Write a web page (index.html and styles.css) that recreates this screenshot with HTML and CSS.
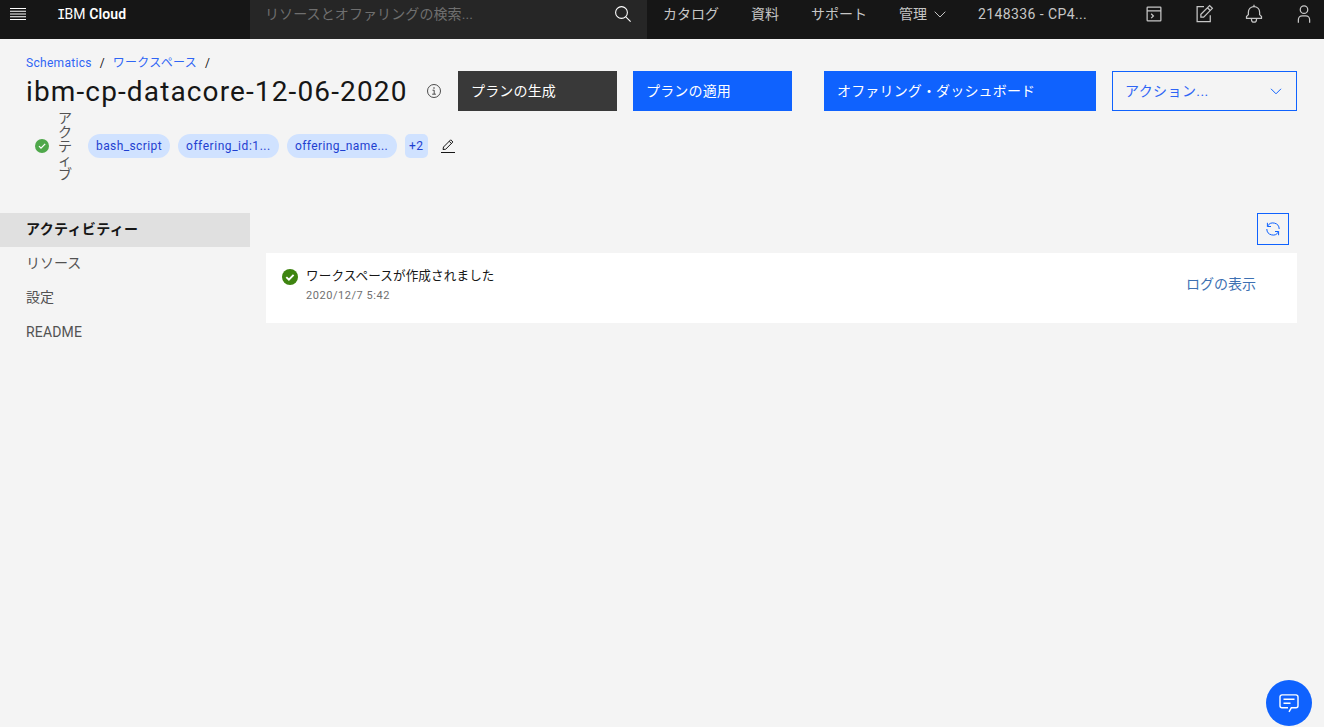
FILE: index.html
```
<!DOCTYPE html>
<html lang="ja">
<head>
    <meta charset="UTF-8">
    <meta name="viewport" content="width=device-width, initial-scale=1.0">
    <title>Schematics - IBM Cloud</title>
    <link rel="stylesheet" href="styles.css">
</head>
<body>
    <!-- Global header -->
    <header class="header">
        <div class="brand">
            <svg class="menu-icon" width="16" height="12" viewBox="0 0 16 12">
                <path d="M0 .5h16M0 3.250h16M0 6h16M0 8.750h16M0 11.500h16" stroke="#fff"/>
            </svg>
            <span class="brand-name"><span class="brand-i">I</span>BM <b>Cloud</b></span>
        </div>
        <div class="search">
            <span class="ja">リソースとオファリングの検索...</span>
            <svg width="16" height="16" viewBox="0 0 16 16" fill="none" stroke="#fff" stroke-width="1.1">
                <circle cx="6.5" cy="6.5" r="5.9"/>
                <path d="M10.8 10.8l4.8 4.8"/>
            </svg>
        </div>
        <nav class="nav">
            <a><span class="ja">カタログ</span></a>
            <a><span class="ja">資料</span></a>
            <a><span class="ja">サポート</span></a>
            <a><span class="ja">管理</span>
                <svg width="12" height="7" viewBox="0 0 12 7" fill="none" stroke="#c6c6c6"><path d="M.7.7L6 6 11.3.7"/></svg>
            </a>
            <a class="account">2148336 - CP4...</a>
        </nav>
        <div class="header-icons">
            <svg width="20" height="20" viewBox="0 0 32 32" fill="#c6c6c6">
                <path d="M26 4H6a2 2 0 0 0-2 2v20a2 2 0 0 0 2 2h20a2 2 0 0 0 2-2V6a2 2 0 0 0-2-2zm0 2v4H6V6zM6 26V12h20v14z"/>
                <path d="M10.8 16.2l1.4-1.4 4.2 4.2-4.2 4.2-1.4-1.4 2.8-2.8z"/>
            </svg>
            <svg width="20" height="20" viewBox="0 0 32 32" fill="none" stroke="#c6c6c6" stroke-width="2">
                <path d="M16 4H5v24h21V18"/>
                <path d="M11 21v-4.500L25 2.600l4.400 4.400L15.500 21zM21.500 6l4.500 4.500"/>
            </svg>
            <svg width="20" height="20" viewBox="0 0 32 32" fill="#c6c6c6">
                <path d="M28.700 19.300L26 16.600V13a10 10 0 0 0-9-9.950V1h-2v2.050A10 10 0 0 0 6 13v3.600l-2.700 2.700A1 1 0 0 0 3 20v3a1 1 0 0 0 1 1h7v1a5 5 0 0 0 10 0v-1h7a1 1 0 0 0 1-1v-3a1 1 0 0 0-.3-.7zM19 25a3 3 0 0 1-6 0v-1h6zm8-3H5v-1.600l2.700-2.700A1 1 0 0 0 8 17v-4a8 8 0 0 1 16 0v4a1 1 0 0 0 .3.700l2.700 2.700z"/>
            </svg>
            <svg width="20" height="20" viewBox="0 0 32 32" fill="none" stroke="#c6c6c6" stroke-width="2">
                <circle cx="16" cy="9" r="6"/>
                <path d="M7 30v-5a6 6 0 0 1 6-6h6a6 6 0 0 1 6 6v5"/>
            </svg>
        </div>
    </header>

    <!-- Workspace title, tags and actions -->
    <section class="page-header">
        <div class="title-area">
            <div class="breadcrumb">
                <a class="crumb">Schematics</a><span>/</span><a class="crumb-ja">ワークスペース</a><span>/</span>
            </div>
            <div class="title-row">
                <h1>ibm-cp-datacore-12-06-2020</h1>
                <svg width="14" height="14" viewBox="0 0 14 14" fill="none" stroke="#393939" stroke-width=".9">
                    <circle cx="7" cy="7" r="6.500"/>
                    <path d="M5.500 6.200H7.200V10M5.200 10.200h3.700"/>
                    <circle cx="7" cy="3.900" r=".75" fill="#393939" stroke="none"/>
                </svg>
            </div>
            <div class="status-row">
                <svg class="status-icon" width="14" height="14" viewBox="0 0 14 14">
                    <circle cx="7" cy="7" r="7" fill="#4fa84b"/>
                    <path d="M4 7.100l2 2 4.200-4.200" fill="none" stroke="#fff" stroke-width="1.300"/>
                </svg>
                <span class="status-text">アクティブ</span>
                <span class="tag tag-bash">bash_script</span>
                <span class="tag tag-id">offering_id:1...</span>
                <span class="tag tag-name">offering_name...</span>
                <span class="tag tag-more">+2</span>
                <svg class="edit-icon" width="14" height="14" viewBox="0 0 14 14" fill="none" stroke="#161616">
                    <path d="M0 13.500h14"/>
                    <path d="M2 10.500l.5-2.500L9.700.8 11.900 3 4.700 10.200zM8.200 2.300l2.200 2.200"/>
                </svg>
            </div>
        </div>
        <div class="actions">
            <button class="btn btn-dark">プランの生成</button>
            <button class="btn btn-primary">プランの適用</button>
            <button class="btn btn-primary btn-dashboard">オファリング・ダッシュボード</button>
            <button class="btn btn-outline"><span class="ja">アクション...</span>
                <svg width="12" height="7" viewBox="0 0 12 7" fill="none" stroke="#0f62fe"><path d="M1 .8l5 5 5-5"/></svg>
            </button>
        </div>
    </section>

    <div class="content">
        <nav class="side-nav">
            <a class="active">アクティビティー</a>
            <a>リソース</a>
            <a>設定</a>
            <a class="readme">README</a>
        </nav>
        <main class="activity">
            <button class="refresh">
                <svg width="14" height="14" viewBox="0 0 14 14" fill="none" stroke="#0f62fe">
                    <path d="M1.500 4.300A6.200 6.200 0 0 1 13.200 7M12.500 9.700A6.200 6.200 0 0 1 .8 7"/>
                    <path d="M1.400.8v3.700H5M12.600 13.200V9.500H9"/>
                </svg>
            </button>
            <div class="card">
                <svg class="card-icon" width="16" height="16" viewBox="0 0 16 16">
                    <circle cx="8" cy="8" r="8" fill="#3e8410"/>
                    <path d="M4.300 8.100l2.600 2.600 4.700-4.800" fill="none" stroke="#fff" stroke-width="1.900"/>
                </svg>
                <div class="card-text">
                    <p class="message">ワークスペースが作成されました</p>
                    <p class="date">2020/12/7 5:42</p>
                </div>
                <a class="log-link">ログの表示</a>
            </div>
        </main>
    </div>

    <!-- Floating chat button -->
    <button class="chat">
        <svg width="20" height="19" viewBox="0 0 20 19" fill="none" stroke="#fff" stroke-width="1.400">
            <path d="M10 17.800l2.300-4H17a2 2 0 0 0 2-2V2.900a2 2 0 0 0-2-2H3a2 2 0 0 0-2 2v8.900a2 2 0 0 0 2 2h6"/>
            <path d="M4.500 5.300h11M4.500 9.300h7"/>
        </svg>
    </button>
</body>
</html>
```
FILE: styles.css
```
* {
    margin: 0;
    padding: 0;
    box-sizing: border-box;
}

body {
    height: 727px;
    font-family: Roboto, "Noto Sans CJK JP", sans-serif;
    font-size: 14px;
    color: #161616;
    background-color: #f4f4f4;
    overflow: hidden;
}

svg {
    display: block;
    flex: none;
}

button {
    font: inherit;
    cursor: pointer;
}

.ja {
    padding-bottom: 2px;
}

/* Header */
.header {
    display: flex;
    height: 39px;
    background-color: #161616;
}

.brand,
.search,
.nav,
.header-icons {
    display: flex;
    align-items: center;
    padding-bottom: 11px;
    white-space: nowrap;
}

.brand {
    width: 250px;
    padding-left: 10px;
    color: #fff;
}

.brand-name {
    margin-left: 31px;
    letter-spacing: 0.1px;
}

.brand-name b {
    font-weight: 600;
}

.brand-i {
    font-family: "DejaVu Sans Mono", monospace;
    margin-right: -1px;
}

.search {
    width: 397px;
    padding-left: 15px;
    padding-right: 16px;
    justify-content: space-between;
    letter-spacing: 0.1px;
    color: #6f6f6f;
    background-color: #262626;
}

.nav a {
    display: flex;
    align-items: center;
    gap: 7px;
    padding: 0 16px;
    color: #c6c6c6;
}

.nav .account {
    letter-spacing: 0.4px;
}

.header-icons {
    gap: 30px;
    margin-left: auto;
    padding-right: 10.500px;
}

/* Page header */
.page-header {
    display: flex;
    justify-content: space-between;
    height: 174px;
    padding: 0 27px 0 26px;
}

.title-area {
    padding-top: 15px;
}

.breadcrumb {
    display: flex;
    gap: 8px;
    height: 17px;
    line-height: 18px;
    font-size: 12px;
}

.breadcrumb a {
    color: #2f65f5;
}

.breadcrumb .crumb {
    letter-spacing: 0.3px;
}

.breadcrumb .crumb-ja {
    letter-spacing: 0.3px;
}

.title-row {
    display: flex;
    align-items: center;
    height: 40px;
}

h1 {
    width: 401px;
    font-size: 28px;
    font-weight: 400;
    letter-spacing: 1.130px;
    white-space: nowrap;
}

.status-row {
    display: flex;
    align-items: center;
    height: 70px;
    padding-left: 9px;
}

.status-text {
    width: 14px;
    margin: 0 16px 0 9px;
    line-height: 14px;
    color: #525252;
}

.tag {
    height: 24px;
    margin-right: 8px;
    padding: 0 8px;
    border-radius: 12px;
    font-size: 12px;
    line-height: 24px;
    white-space: nowrap;
    letter-spacing: 0.4px;
    color: #1f3fd0;
    background-color: #d0e2ff;
}

.tag-bash {
    width: 82px;
}

.tag-id {
    width: 101px;
    letter-spacing: 0.550px;
}

.tag-name {
    width: 110px;
}

.tag-more {
    width: 23px;
    padding: 0 4px;
    margin-right: 13px;
    border-radius: 5px;
}

.actions {
    display: flex;
    gap: 16px;
    padding-top: 32px;
}

.btn {
    width: 159px;
    height: 40px;
    padding: 0 13px 2px;
    border: none;
    text-align: left;
    letter-spacing: 0.160px;
    color: #fff;
}

.btn-dark {
    background-color: #393939;
}

.btn-primary {
    background-color: #0f62fe;
}

.btn-dashboard {
    width: 272px;
    margin-left: 16px;
}

.btn-outline {
    display: flex;
    align-items: center;
    justify-content: space-between;
    width: 185px;
    padding: 0 14px 0 12px;
    border: 1px solid #0f62fe;
    letter-spacing: 0.4px;
    color: #2f65f5;
    background: none;
}

/* Content */
.content {
    display: flex;
}

.side-nav {
    width: 250px;
}

.side-nav a {
    display: block;
    height: 34px;
    padding-left: 26px;
    line-height: 32px;
    color: #525252;
}

.side-nav .active {
    font-weight: 700;
    letter-spacing: 0.350px;
    color: #161616;
    background-color: #e0e0e0;
}

.side-nav .readme {
    line-height: 34px;
    letter-spacing: 0.150px;
}

.activity {
    flex: 1;
    padding: 0 27px 0 16px;
}

.refresh {
    display: flex;
    align-items: center;
    justify-content: center;
    width: 32px;
    height: 32px;
    margin: 0 8px 8px auto;
    border: 1px solid #0f62fe;
    background: none;
}

.card {
    display: flex;
    height: 70px;
    padding: 13px 41px 0 16px;
    background-color: #fff;
}

.card-icon {
    margin: 3px 8px 0 0;
}

.message {
    padding-top: 1px;
    font-size: 12.600px;
    line-height: 18px;
    letter-spacing: 0.1px;
}

.date {
    font-size: 11px;
    line-height: 22px;
    letter-spacing: 0.550px;
    color: #6f6f6f;
}

.log-link {
    margin-left: auto;
    line-height: 37px;
    color: #3d70b2;
}

.chat {
    position: fixed;
    right: 12px;
    bottom: 1px;
    display: flex;
    align-items: center;
    justify-content: center;
    width: 46px;
    height: 46px;
    border: none;
    border-radius: 50%;
    background-color: #0f62fe;
}
```
